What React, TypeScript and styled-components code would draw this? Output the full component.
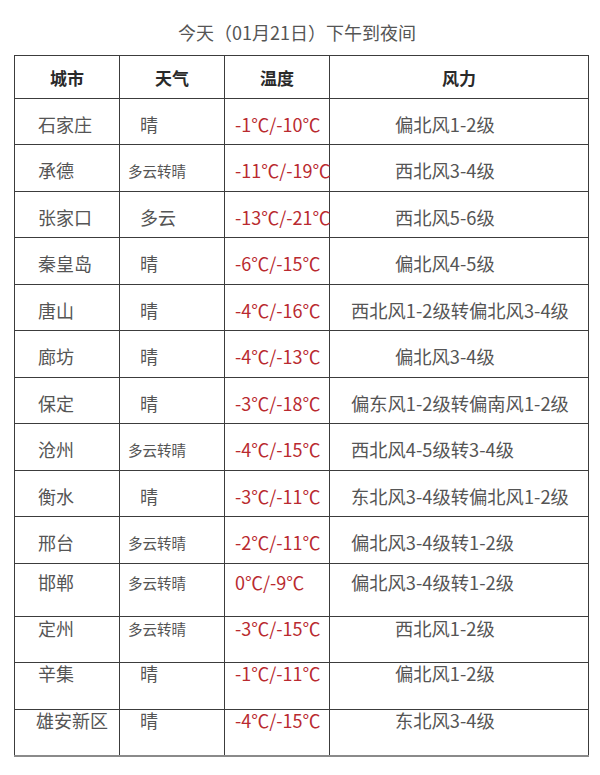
import React from 'react';
import styled, { createGlobalStyle } from 'styled-components';

const GlobalStyle = createGlobalStyle`
  body {
    margin: 0;
    background: #ffffff;
    font-family: "Noto Sans CJK SC", "Noto Sans", sans-serif;
  }
`;

const Page = styled.div`
  width: 600px;
  padding: 0 12px 0 14px;
  box-sizing: border-box;
`;

const Title = styled.div`
  height: 55px;
  padding-top: 20px;
  box-sizing: border-box;
  text-align: center;
  font-size: 18px;
  line-height: 24px;
  color: #555;
  padding-right: 8px;
`;

const Table = styled.table`
  width: 574px;
  table-layout: fixed;
  border-collapse: collapse;
  border-bottom: 2px solid #8a8a8a;
`;

const HeadCell = styled.th`
  height: 42px;
  padding: 0;
  border: 1px solid #3c3c3c;
  font-size: 17px;
  font-weight: 700;
  color: #2a2a2a;
  text-align: center;
  vertical-align: middle;
`;

const Row = styled.tr<{ $h: number }>`
  height: ${(p) => p.$h}px;
`;

// $pad: null = centred in the row, a number = top-aligned with that offset
const Cell = styled.td<{ $indent: number; $pad: number | null }>`
  padding: ${(p) => (p.$pad === null ? 5 : p.$pad)}px 0 0 ${(p) => p.$indent}px;
  border: 1px solid #3c3c3c;
  border-top-color: #5a5a5a;
  vertical-align: ${(p) => (p.$pad === null ? 'middle' : 'top')};
  line-height: ${(p) => (p.$pad === null ? 24 : 20)}px;
  white-space: nowrap;
  overflow: visible;
  color: #555;
`;

const City = styled.span`
  font-size: 18px;
`;

const Weather = styled.span<{ $small: boolean }>`
  font-size: ${(p) => (p.$small ? '14.5px' : '18px')};
`;

const Temp = styled.span`
  font-size: 18px;
  color: #b92a2f;
  position: relative;
  z-index: 1;
`;

const Wind = styled.span`
  font-size: 18.3px;
`;

type Item = {
  city: string;
  weather: string;
  temp: string;
  wind: string;
  h: number;
  pad?: number;
};

const rows: Item[] = [
  { city: '石家庄', weather: '晴', temp: '-1℃/-10℃', wind: '偏北风1-2级', h: 46 },
  { city: '承德', weather: '多云转晴', temp: '-11℃/-19℃', wind: '西北风3-4级', h: 47 },
  { city: '张家口', weather: '多云', temp: '-13℃/-21℃', wind: '西北风5-6级', h: 46 },
  { city: '秦皇岛', weather: '晴', temp: '-6℃/-15℃', wind: '偏北风4-5级', h: 47 },
  { city: '唐山', weather: '晴', temp: '-4℃/-16℃', wind: '西北风1-2级转偏北风3-4级', h: 46 },
  { city: '廊坊', weather: '晴', temp: '-4℃/-13℃', wind: '偏北风3-4级', h: 47 },
  { city: '保定', weather: '晴', temp: '-3℃/-18℃', wind: '偏东风1-2级转偏南风1-2级', h: 46 },
  { city: '沧州', weather: '多云转晴', temp: '-4℃/-15℃', wind: '西北风4-5级转3-4级', h: 47 },
  { city: '衡水', weather: '晴', temp: '-3℃/-11℃', wind: '东北风3-4级转偏北风1-2级', h: 46 },
  { city: '邢台', weather: '多云转晴', temp: '-2℃/-11℃', wind: '偏北风3-4级转1-2级', h: 47 },
  { city: '邯郸', weather: '多云转晴', temp: '0℃/-9℃', wind: '偏北风3-4级转1-2级', h: 53, pad: 8 },
  { city: '定州', weather: '多云转晴', temp: '-3℃/-15℃', wind: '西北风1-2级', h: 46, pad: 1 },
  { city: '辛集', weather: '晴', temp: '-1℃/-11℃', wind: '偏北风1-2级', h: 47, pad: 0 },
  { city: '雄安新区', weather: '晴', temp: '-4℃/-15℃', wind: '东北风3-4级', h: 46, pad: 0 },
];

const App = () => {
  return (
    <Page>
      <GlobalStyle />
      <Title>今天（01月21日）下午到夜间</Title>
      <Table>
        <colgroup>
          <col style={{ width: 105 }} />
          <col style={{ width: 105 }} />
          <col style={{ width: 105 }} />
          <col style={{ width: 259 }} />
        </colgroup>
        <thead>
          <tr>
            <HeadCell>城市</HeadCell>
            <HeadCell>天气</HeadCell>
            <HeadCell>温度</HeadCell>
            <HeadCell>风力</HeadCell>
          </tr>
        </thead>
        <tbody>
          {rows.map((r) => {
            const small = r.weather.length > 2;
            const long = r.wind.length > 7;
            const pad = r.pad ?? null;
            return (
              <Row key={r.city} $h={r.h}>
                <Cell $indent={r.city.length > 3 ? 21 : 23} $pad={pad}>
                  <City>{r.city}</City>
                </Cell>
                <Cell $indent={small ? 8 : 20} $pad={pad}>
                  <Weather $small={small}>{r.weather}</Weather>
                </Cell>
                <Cell $indent={10} $pad={pad}>
                  <Temp>{r.temp}</Temp>
                </Cell>
                <Cell $indent={long ? 21 : 65} $pad={pad}>
                  <Wind>{r.wind}</Wind>
                </Cell>
              </Row>
            );
          })}
        </tbody>
      </Table>
    </Page>
  );
};

export default App;
